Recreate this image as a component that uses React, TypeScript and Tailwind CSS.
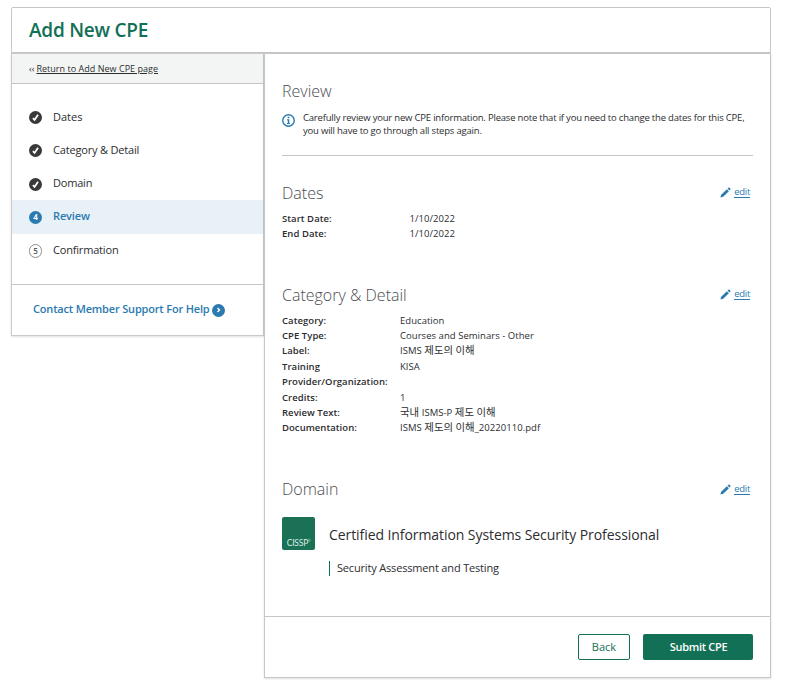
import type { ReactNode } from "react";

function CheckBadge() {
  return (
    <svg width="13" height="13" viewBox="0 0 13 13" className="mt-[1.4px] shrink-0">
      <circle cx="6.5" cy="6.5" r="6.5" fill="#38393b" />
      <path d="M3.9 7.2 5.6 8.9 9 3.8" fill="none" stroke="#fff" strokeWidth="1.8" />
    </svg>
  );
}

function NumberBadge({ n, active }: { n: number; active?: boolean }) {
  return (
    <span
      className={
        active
          ? "mt-px flex size-[13px] shrink-0 items-center justify-center rounded-full bg-[#2a7ab0] text-[8px] leading-none font-bold text-white"
          : "mt-px flex h-[14px] w-[13px] shrink-0 items-center justify-center rounded-full border border-[#8b8d8e] text-[8px] leading-none font-semibold text-[#55585a]"
      }
    >
      {n}
    </span>
  );
}

function EditLink() {
  return (
    <a className="mr-[3px] flex h-[22px] items-center gap-[3px] text-[9.5px] tracking-[-0.3px] text-[#2a7ab0]">
      <svg width="11" height="11" viewBox="0 0 11 11" fill="#2a7ab0" className="mt-px">
        <path d="M0.4 10.6 1.2 7.7 6.9 2.2 8.9 4.2 3.2 9.8Z" />
        <path d="M7.5 1.6 8.5 0.7Q9 0.3 9.5 0.7L10.3 1.5Q10.7 2 10.3 2.5L9.4 3.5Z" />
      </svg>
      <span className="border-b border-[#2a7ab0] leading-[10px]">edit</span>
    </a>
  );
}

function Heading({ children, edit, low }: { children: ReactNode; edit?: boolean; low?: boolean }) {
  return (
    <div className="flex h-6 items-start justify-between">
      <h2 className="text-[16px] leading-6 font-light text-[#4a4d50]">{children}</h2>
      {edit && (
        <div className={low ? "pt-px" : ""}>
          <EditLink />
        </div>
      )}
    </div>
  );
}

function Field({ label, value, wide }: { label: ReactNode; value: ReactNode; wide?: boolean }) {
  return (
    <div className="flex text-[9.5px] leading-[15.4px]">
      <dt className={wide ? "w-[127.5px] font-semibold tracking-[0.05px]" : "w-[118px] font-semibold tracking-[0.05px]"}>
        {label}
      </dt>
      <dd className="tracking-[0.04px]">{value}</dd>
    </div>
  );
}

function Ko({ children }: { children: string }) {
  return <span className="font-['Noto_Sans_CJK_KR',sans-serif] text-[10.4px] leading-none">{children}</span>;
}

const steps = [
  { name: "Dates", text: "pt-[1.4px]" },
  { name: "Category & Detail", text: "tracking-[-0.18px]" },
  { name: "Domain", text: "tracking-[-0.2px]" },
  { name: "Review", text: "pb-[1.2px] tracking-[-0.15px]" },
  { name: "Confirmation", text: "tracking-[-0.18px]" },
];

export default function App() {
  return (
    <div className="h-[693px] w-[786px] bg-white pt-[7px] pl-[11px] font-['Open_Sans','Noto_Sans_CJK_KR',sans-serif] text-[#2c2d2f]">
      <header className="flex h-[46px] w-[760px] items-center rounded-t-[2px] border border-[#c5c7c7] pl-[17px]">
        <h1 className="text-[19px] leading-6 font-semibold tracking-[-0.25px] text-[#127056]">Add New CPE</h1>
      </header>
      <div className="flex w-[760px] items-start">
        <aside className="h-[283px] w-[253px] border border-[#c9cbcb] shadow-[0_1px_2px_rgba(0,0,0,0.12)]">
          <div className="flex h-[30px] items-center gap-[2px] border-b border-[#c5c7c7] bg-[#f3f5f4] pl-[17px] text-[9px]">
            <span>‹‹</span>
            <a className="tracking-[0.03px] underline underline-offset-1">Return to Add New CPE page</a>
          </div>
          <ol className="h-[201px] border-b border-[#c5c7c7] pt-[16px]">
            {steps.map((step, i) => (
              <li
                key={step.name}
                className={
                  i === 3
                    ? "flex h-[33.4px] items-center gap-[11px] bg-[#e8f1f7] pl-[17px] text-[11px] font-semibold text-[#2a7ab0]"
                    : "flex h-[33.4px] items-center gap-[11px] pl-[17px] text-[11px]"
                }
              >
                {i < 3 ? <CheckBadge /> : <NumberBadge n={i + 1} active={i === 3} />}
                <span className={step.text}>{step.name}</span>
              </li>
            ))}
          </ol>
          <a className="flex h-[50px] items-center gap-[3px] pl-[21px] text-[11px] font-semibold text-[#2a7ab0]">
            <span className="w-[176px] pb-[2px] tracking-[-0.175px] whitespace-nowrap">Contact Member Support For Help</span>
            <svg width="13" height="13" viewBox="0 0 13 13">
              <circle cx="6.5" cy="6.5" r="6.5" fill="#2a7ab0" />
              <path d="M5.5 4 7.5 6 5.5 8" fill="none" stroke="#fff" strokeWidth="1.4" />
            </svg>
          </a>
        </aside>
        <main className="h-[625px] w-[507px] border border-[#c5c7c7] shadow-[0_1px_2px_rgba(0,0,0,0.12)]">
          <div className="h-[563px] border-b border-[#c5c7c7] px-[17px] pt-[25px]">
            <Heading>Review</Heading>
            <div className="mt-2 flex h-[45px] gap-[9px] border-b border-[#c5c7c7]">
              <svg width="13" height="13" viewBox="0 0 12 12" className="mt-[2.5px] -mr-px shrink-0">
                <circle cx="6" cy="6" r="5.3" fill="none" stroke="#2a7ab0" strokeWidth="1.3" />
                <path d="M5.2 2.6H6.8V4H5.2ZM4.7 4.9H6.7V8.3H7.4V9.2H4.6V8.3H5.3V5.7H4.7Z" fill="#2a7ab0" />
              </svg>
              <p className="text-[9.5px] leading-[13px] tracking-[-0.2px] whitespace-nowrap">
                Carefully review your new CPE information. Please note that if you need to change the dates for this CPE,
                <br />
                you will have to go through all steps again.
              </p>
            </div>
            <section className="mt-[25px] h-[102px]">
              <Heading edit>Dates</Heading>
              <dl className="pt-[5.6px]">
                <Field wide label="Start Date:" value="1/10/2022" />
                <Field wide label="End Date:" value="1/10/2022" />
              </dl>
            </section>
            <section className="h-[194px]">
              <Heading edit>Category &amp; Detail</Heading>
              <dl className="pt-[5.6px]">
                <Field label="Category:" value="Education" />
                <Field label="CPE Type:" value="Courses and Seminars - Other" />
                <Field label="Label:" value={<>ISMS <Ko>제도의 이해</Ko></>} />
                <Field label={<>Training<br />Provider/Organization:</>} value="KISA" />
                <Field label="Credits:" value="1" />
                <Field label="Review Text:" value={<><Ko>국내</Ko> ISMS-P <Ko>제도 이해</Ko></>} />
                <Field label="Documentation:" value={<>ISMS <Ko>제도의 이해</Ko>_20220110.pdf</>} />
              </dl>
            </section>
            <section>
              <Heading edit low>Domain</Heading>
              <div className="mt-4 flex gap-[14px]">
                <div className="flex size-[33px] items-end justify-center rounded-[2px] bg-[#1a7156] pb-[2px] font-[Lato] text-[8.5px] leading-[9px] tracking-[-0.2px] text-[#dcebe5]">
                  <span>CISSP</span>
                  <span className="text-[3px] leading-[13px]">®</span>
                </div>
                <div>
                  <h3 className="pt-[8px] text-[14px] leading-[20px] tracking-[-0.075px]">
                    Certified Information Systems Security Professional
                  </h3>
                  <p className="mt-[16px] h-[15px] border-l border-[#127056] pl-[7px] text-[11px] leading-[14px] tracking-[-0.17px]">
                    Security Assessment and Testing
                  </p>
                </div>
              </div>
            </section>
          </div>
          <div className="flex justify-end gap-[13px] pt-[17px] pr-[17px] text-[11px]">
            <button className="h-[26px] w-[52px] rounded-[2px] border border-[#127056] text-[#127056]">Back</button>
            <button className="h-[26px] w-[110px] rounded-[2px] bg-[#127056] pl-px font-semibold tracking-[-0.3px] text-white">
              Submit CPE
            </button>
          </div>
        </main>
      </div>
    </div>
  );
}
